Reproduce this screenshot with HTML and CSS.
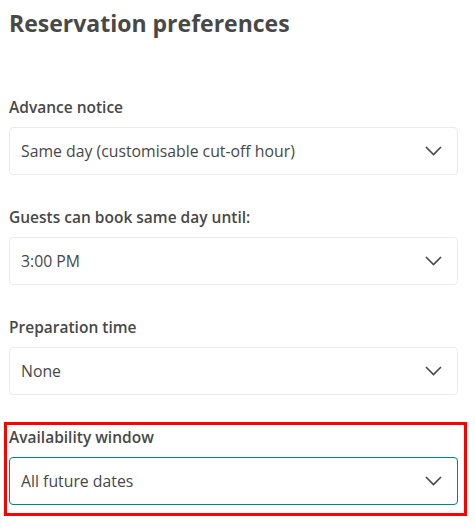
FILE: index.html
```html
<!DOCTYPE html>
<html lang="en">

<head>
    <meta charset="UTF-8">
    <meta name="viewport" content="width=device-width, initial-scale=1">
    <title>Reservation preferences</title>
    <link rel="stylesheet" href="styles.css">
</head>

<body>

    <h1>Reservation preferences</h1>

    <div class="field">
        <label>Advance notice</label>
        <div class="select">
            <span>Same day (customisable cut-off hour)</span>
            <svg width="17" height="10" viewBox="0 0 17 10"><polyline points="1,1 8.5,8.5 16,1" /></svg>
        </div>
    </div>

    <div class="field">
        <label>Guests can book same day until:</label>
        <div class="select">
            <span>3:00 PM</span>
            <svg width="17" height="10" viewBox="0 0 17 10"><polyline points="1,1 8.5,8.5 16,1" /></svg>
        </div>
    </div>

    <div class="field">
        <label>Preparation time</label>
        <div class="select">
            <span>None</span>
            <svg width="17" height="10" viewBox="0 0 17 10"><polyline points="1,1 8.5,8.5 16,1" /></svg>
        </div>
    </div>

    <div class="field highlight">
        <label>Availability window</label>
        <div class="select focused">
            <span>All future dates</span>
            <svg width="17" height="10" viewBox="0 0 17 10"><polyline points="1,1 8.5,8.5 16,1" /></svg>
        </div>
    </div>

</body>

</html>
```

FILE: styles.css
```css
body {
    font-family: 'Open Sans', 'Liberation Sans', sans-serif;
    color: #484848;
    margin: 0;
    padding: 0 17px 0 9px;
    background: white;
}

h1 {
    font-size: 23px;
    font-weight: 700;
    line-height: 30px;
    margin: 8px 0 59px 0;
}

.field {
    margin-bottom: 32px;
}

.field label {
    display: block;
    font-size: 15.5px;
    font-weight: 600;
    line-height: 20px;
    margin-bottom: 10px;
}

.select {
    display: flex;
    align-items: center;
    justify-content: space-between;
    height: 46px;
    padding: 0 15px 0 11px;
    border: 1px solid #ebebeb;
    border-radius: 4px;
    font-size: 15.8px;
}

.select svg {
    fill: none;
    stroke: #484848;
    stroke-width: 1.6;
}

.select.focused {
    border-color: #008489;
}

.highlight {
    border: 3px solid red;
    margin: -5px -9px 0 -5px;
    padding: 2px 6px 8px 2px;
}
```
